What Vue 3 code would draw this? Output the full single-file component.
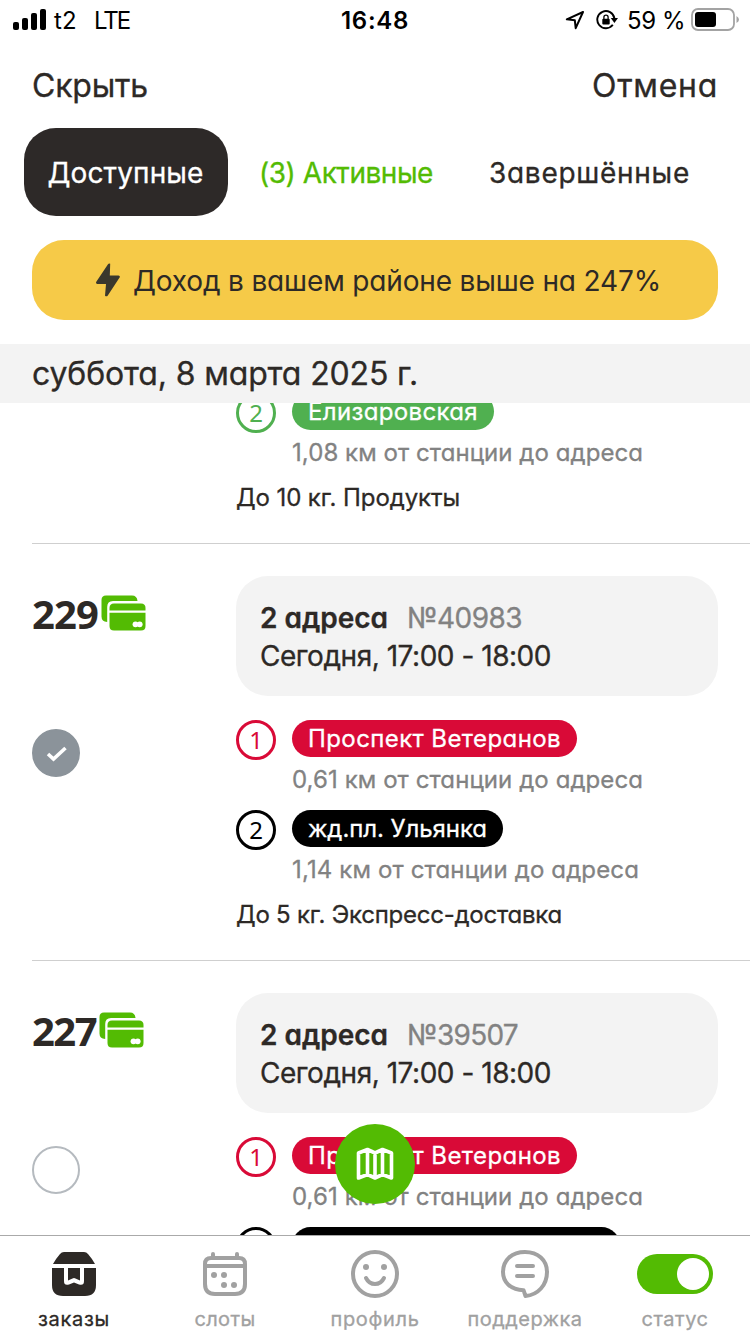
<script setup>
const fitText = (el, { value }) => {
  if (!value) return
  el.style.letterSpacing = '0px'
  const natural = el.getBoundingClientRect().width
  el.style.letterSpacing = (value - natural) / el.textContent.trim().length + 'px'
}
const vFit = {
  mounted(el, binding) {
    fitText(el, binding)
    document.fonts.ready.then(() => fitText(el, binding))
  },
}

const orders = [
  {
    id: 'a',
    stations: [
      { n: 2, name: 'Елизаровская', w: 170, color: '#50b050', dist: '1,08 км от станции до адреса', dw: 351 },
    ],
    note: 'До 10 кг. Продукты',
    nw: 224,
  },
  {
    id: 'b',
    price: '229',
    pw: 66,
    number: '№40983',
    numw: 115,
    checked: true,
    stations: [
      { n: 1, name: 'Проспект Ветеранов', w: 253, color: '#d90a37', dist: '0,61 км от станции до адреса', dw: 351 },
      { n: 2, name: 'жд.пл. Ульянка', w: 179, color: '#000000', dist: '1,14 км от станции до адреса', dw: 347 },
    ],
    note: 'До 5 кг. Экспресс-доставка',
    nw: 326,
  },
  {
    id: 'c',
    price: '227',
    pw: 64,
    number: '№39507',
    numw: 111,
    stations: [
      { n: 1, name: 'Проспект Ветеранов', w: 253, color: '#d90a37', dist: '0,61 км от станции до адреса', dw: 351 },
      { w: 296, color: '#000000' },
    ],
  },
]
</script>

<template>
  <div class="screen">
    <div class="status">
      <svg class="signal" width="34" height="22" viewBox="0 0 34 22">
        <rect x="0" y="13" width="6" height="8" rx="2" />
        <rect x="9" y="9" width="6" height="12" rx="2" />
        <rect x="18" y="4" width="6" height="17" rx="2" />
        <rect x="27" y="0" width="6" height="21" rx="2" />
      </svg>
      <span v-fit="23" class="carrier">t2</span>
      <span v-fit="35" class="lte">LTE</span>
      <span v-fit="68" class="time">16:48</span>
      <div class="status-right">
        <svg width="20" height="20" viewBox="0 0 20 20">
          <path d="M18 2 L1.8 9.3 L9.8 10.2 L10.7 18.2 Z" fill="none" stroke="#000" stroke-width="2" stroke-linejoin="round" />
        </svg>
        <svg class="lock" width="23" height="20" viewBox="0 0 23 20">
          <path d="M16.8 14.8 A8.6 8.6 0 1 1 18.4 8.4" fill="none" stroke="#000" stroke-width="1.9" />
          <path d="M14.8 8 H22 L18.4 13 Z" />
          <rect x="6.3" y="8.8" width="7.4" height="5.8" rx="1" />
          <path d="M7.9 9 V7.2 A2.1 2.1 0 0 1 12.1 7.2 V9" fill="none" stroke="#000" stroke-width="1.3" />
        </svg>
        <span v-fit="58" class="percent">59 %</span>
        <svg class="battery" width="49" height="24" viewBox="0 0 49 24">
          <rect x="1" y="1" width="42" height="21" rx="6" fill="none" stroke="#a3a3a3" stroke-width="1.8" />
          <rect x="4" y="4" width="21" height="15" rx="3" />
          <path d="M45.5 8 Q48 9.5 48 11.5 Q48 13.5 45.5 15 Z" fill="#a3a3a3" />
        </svg>
      </div>
    </div>

    <div class="actions">
      <span v-fit="116">Скрыть</span>
      <span v-fit="126">Отмена</span>
    </div>

    <div class="tabs">
      <div class="tab active"><span v-fit="156">Доступные</span></div>
      <div class="tab green"><span v-fit="174">(3) Активные</span></div>
      <div class="tab done"><span v-fit="201">Завершённые</span></div>
    </div>

    <div class="banner">
      <svg width="24" height="34" viewBox="0 0 24 34">
        <path d="M12 1.2 Q13 -.2 14.2 .8 L13.8 12.5 H22.5 Q24.5 12.8 23.6 14.6 L11.8 32.4 Q10.6 34 9 32.8 L10 21 H1.2 Q-.6 20.5 .3 18.8 Z" fill="#3a382d" />
      </svg>
      <span v-fit="528">Доход в вашем районе выше на 247%</span>
    </div>

    <div class="date"><span v-fit="386">суббота, 8 марта 2025 г.</span></div>

    <div class="list">
      <section v-for="o in orders" :key="o.id" class="order" :class="{ scrolled: !o.price }">
        <div class="side">
          <div v-if="o.price" class="price">
            <span v-fit="o.pw">{{ o.price }}</span>
            <svg width="45" height="36" viewBox="0 0 45 36">
              <path d="M5 .5 H31 Q36 .5 36.5 6 H12 Q6.2 6 6.2 12 V27 Q.5 26.5 .5 21.5 V5 Q.5 .5 5 .5 Z" fill="#53bb03" />
              <path d="M8.5 15.5 V13 Q8.5 8.5 13 8.5 H40 Q44.5 8.5 44.5 13 V15.5 Z" fill="#53bb03" />
              <path d="M8.5 17.7 H44.5 V31 Q44.5 35.5 40 35.5 H13 Q8.5 35.5 8.5 31 Z" fill="#53bb03" />
              <circle cx="34.5" cy="29.3" r="2.9" fill="#fff" />
              <circle cx="38.7" cy="29.3" r="2.9" fill="#fff" />
            </svg>
          </div>
          <div v-if="o.price" class="check" :class="{ on: o.checked }">
            <svg v-if="o.checked" width="22" height="18" viewBox="0 0 22 18">
              <path d="M3 10 L8.5 15 L20.5 4" fill="none" stroke="#fff" stroke-width="3.6" />
            </svg>
          </div>
        </div>
        <div class="main">
          <div v-if="o.price" class="card">
            <div class="line">
              <b v-fit="128">2 адреса</b>
              <span v-fit="o.numw" class="num">{{ o.number }}</span>
            </div>
            <div class="line"><span v-fit="291">Сегодня, 17:00 - 18:00</span></div>
          </div>
          <div v-for="(s, i) in o.stations" :key="i" class="station">
            <div class="ring" :style="{ color: s.color }">{{ s.n }}</div>
            <div class="info">
              <div class="pill" :style="{ background: s.color, width: s.w + 'px' }">
                <span v-if="s.name" v-fit="s.w">{{ s.name }}</span>
              </div>
              <div v-if="s.dist" class="dist"><span v-fit="s.dw">{{ s.dist }}</span></div>
            </div>
          </div>
          <div v-if="o.note" class="note"><span v-fit="o.nw">{{ o.note }}</span></div>
        </div>
      </section>
      <div class="fab">
        <svg width="38" height="34" viewBox="0 0 38 34" fill="none" stroke="#fff" stroke-width="3.6" stroke-linejoin="round">
          <path d="M2.5 6 L11.5 2.5 L19 6 L26.5 2.5 L35.5 6 V31 L26.5 27.5 L19 31 L11.5 27.5 L2.5 31 Z M11.5 2.5 V27.5 M19 6 V31 M26.5 2.5 V27.5" />
        </svg>
      </div>
    </div>

    <nav class="nav">
      <div class="item current">
        <div class="icon">
          <svg width="44" height="44" viewBox="0 0 44 44" fill="#2d2926">
            <path d="M8 2 Q9.5 0 12 0 H32 Q34.5 0 36 2 Q40 6.5 43 12 H1 Q4 6.5 8 2 Z" />
            <path d="M0 16 H12 V29 Q12 34 17 32.5 L22 30.5 L27 32.5 Q32 34 32 29 V16 H44 V33 Q44 44 33 44 H11 Q0 44 0 33 Z" />
            <path d="M16 16 H28 V28.5 L23.5 26.4 Q22 25.8 20.5 26.4 L16 28.5 Z" />
          </svg>
        </div>
        <span v-fit="72">заказы</span>
      </div>
      <div class="item">
        <div class="icon">
          <svg width="44" height="44" viewBox="0 0 44 44" fill="none" stroke="#a1a1a1" stroke-width="4">
            <path d="M8 6 H36 Q42 6 42 12 V32 Q42 42 32 42 H12 Q2 42 2 32 V12 Q2 6 8 6 Z M2 14 H42" />
            <path d="M10 6 V2 M34 6 V2" stroke-linecap="round" />
            <g fill="#a1a1a1" stroke="none">
              <circle cx="11" cy="23" r="3" /><circle cx="21" cy="23" r="3" />
              <circle cx="21" cy="33" r="3" /><circle cx="31" cy="33" r="3" />
            </g>
          </svg>
        </div>
        <span v-fit="61">слоты</span>
      </div>
      <div class="item">
        <div class="icon">
          <svg width="48" height="48" viewBox="0 0 48 48" fill="none" stroke="#a1a1a1" stroke-width="4">
            <circle cx="24" cy="24" r="22" />
            <path d="M15 28 Q18 34 24 34 Q30 34 33 28" stroke-linecap="round" />
            <g fill="#a1a1a1" stroke="none"><circle cx="15" cy="17" r="3" /><circle cx="33" cy="17" r="3" /></g>
          </svg>
        </div>
        <span v-fit="89">профиль</span>
      </div>
      <div class="item">
        <div class="icon">
          <svg width="48" height="48" viewBox="0 0 48 48" fill="none" stroke="#a1a1a1" stroke-width="4" stroke-linejoin="round">
            <path d="M24 2 C37 2 46 10 46 22 C46 35 37 45 24.5 46 L22.5 40.2 C9.5 40 2 32 2 22 C2 10 11 2 24 2 Z" />
            <path d="M16 16 H32 M16 26 H32" stroke-linecap="round" />
          </svg>
        </div>
        <span v-fit="115">поддержка</span>
      </div>
      <div class="item">
        <div class="icon"><div class="toggle"><div class="knob"></div></div></div>
        <span v-fit="67">статус</span>
      </div>
    </nav>
  </div>
</template>

<style>
body {
  margin: 0;
  background: #fff;
}
</style>

<style scoped>
.screen {
  width: 750px;
  height: 1334px;
  display: flex;
  flex-direction: column;
  overflow: hidden;
  background: #fff;
  color: #2d2926;
  font-family: Inter, "Open Sans", sans-serif;
  font-feature-settings: "cv11" 1;
  font-weight: 400;
  -webkit-text-stroke: 0.3px currentColor;
  white-space: nowrap;
}
svg {
  display: block;
  flex: none;
}
.status {
  height: 40px;
  flex: none;
  display: flex;
  align-items: center;
  box-sizing: border-box;
  padding-left: 13px;
  color: #000;
  font: 400 24px/40px Inter, sans-serif;
  -webkit-text-stroke: 0;
}
.status span {
  padding-top: 2px;
}
.signal {
  margin-right: 7px;
}
.carrier {
  margin-right: 17px;
}
.time {
  margin-left: 212px;
  font-weight: 600;
}
.status-right {
  margin-left: auto;
  margin-right: 10px;
  display: flex;
  align-items: center;
}
.lock {
  margin: 0 8px 0 11px;
}
.battery {
  margin: -1px 0 0 6px;
}
.actions {
  height: 88px;
  flex: none;
  display: flex;
  justify-content: space-between;
  padding: 0 32px;
  font-size: 32px;
  line-height: 91px;
}
.tabs {
  height: 88px;
  flex: none;
  display: flex;
  padding-left: 24px;
  font-size: 28px;
  line-height: 90px;
}
.tab.active {
  width: 203px;
  padding-right: 1px;
  text-align: center;
  border-radius: 32px;
  background: #2d2928;
  color: #fff;
}
.tab.green {
  margin-left: 31px;
  color: #53bb03;
}
.tab.done {
  margin-left: 56px;
}
.banner {
  height: 80px;
  flex: none;
  margin: 24px 32px;
  display: flex;
  align-items: center;
  box-sizing: border-box;
  padding-left: 64px;
  gap: 13px;
  border-radius: 32px;
  background: #f6ca48;
  font-size: 28px;
  font-weight: 400;
  -webkit-text-stroke: 0;
}
.banner span {
  padding-top: 2px;
}
.date {
  height: 59px;
  flex: none;
  padding-left: 32px;
  background: #f3f3f3;
  font-size: 32px;
  line-height: 60px;
}
.list {
  flex: 1;
  min-height: 0;
  overflow: hidden;
  position: relative;
}
.order {
  height: 417px;
  box-sizing: border-box;
  margin-left: 32px;
  padding-top: 32px;
  display: flex;
  border-bottom: 1px solid #cfcfcf;
}
.order.scrolled {
  height: 151px;
  padding-top: 0;
  margin-top: -10px;
}
.side {
  width: 204px;
  flex: none;
}
.price {
  height: 76px;
  display: flex;
  gap: 3px;
  font-family: "Open Sans", sans-serif;
  font-size: 40px;
  font-weight: 700;
  line-height: 76px;
  -webkit-text-stroke: 0;
}
.price svg {
  margin-top: 19px;
}
.check {
  width: 48px;
  height: 48px;
  margin-top: 77px;
  box-sizing: border-box;
  display: flex;
  align-items: center;
  justify-content: center;
  border: 2px solid #b5babf;
  border-radius: 50%;
}
.check.on {
  background: #8b939a;
  border-color: #8b939a;
}
.main {
  width: 482px;
}
.card {
  height: 120px;
  box-sizing: border-box;
  margin-bottom: 24px;
  padding: 23px 24px 0;
  border-radius: 32px;
  background: #f3f3f3;
  font-size: 28px;
}
.card b {
  font-weight: 600;
}
.line {
  height: 38px;
  line-height: 38px;
  display: flex;
  gap: 19px;
}
.num {
  color: #828282;
}
.station {
  height: 90px;
  display: flex;
  gap: 16px;
}
.ring {
  width: 40px;
  height: 40px;
  box-sizing: border-box;
  flex: none;
  border: 3px solid currentColor;
  border-radius: 50%;
  font: 400 24px/33px "Noto Sans", sans-serif;
  -webkit-text-stroke: 0;
  text-align: center;
}
.pill {
  height: 37px;
  padding: 0 16px;
  border-radius: 19px;
  color: #fff;
  font-size: 24px;
  line-height: 37px;
  -webkit-text-stroke: 0.3px #fff;
}
.dist {
  height: 46px;
  color: #828282;
  font-size: 24px;
  line-height: 46px;
}
.note {
  font-size: 24px;
  line-height: 30px;
}
.fab {
  position: absolute;
  left: 335px;
  top: 721px;
  width: 80px;
  height: 80px;
  display: flex;
  align-items: center;
  justify-content: center;
  border-radius: 50%;
  background: #53bb03;
}
.nav {
  height: 99px;
  flex: none;
  box-sizing: border-box;
  border-top: 1px solid #aaa;
  display: flex;
  background: #fff;
  color: #a1a1a1;
  font: 400 20px/24px Inter, sans-serif;
  font-feature-settings: normal;
}
.item {
  width: 150px;
  display: flex;
  flex-direction: column;
  align-items: center;
}
.item.current {
  width: 148px;
  padding-right: 2px;
  color: #2d2926;
}
.icon {
  height: 48px;
  margin: 14px 0 9px;
  display: flex;
  align-items: center;
}
.toggle {
  width: 76px;
  height: 40px;
  box-sizing: border-box;
  padding: 4px;
  display: flex;
  justify-content: flex-end;
  border-radius: 20px;
  background: #53bb03;
}
.knob {
  width: 32px;
  height: 32px;
  border-radius: 50%;
  background: #fff;
}
</style>
